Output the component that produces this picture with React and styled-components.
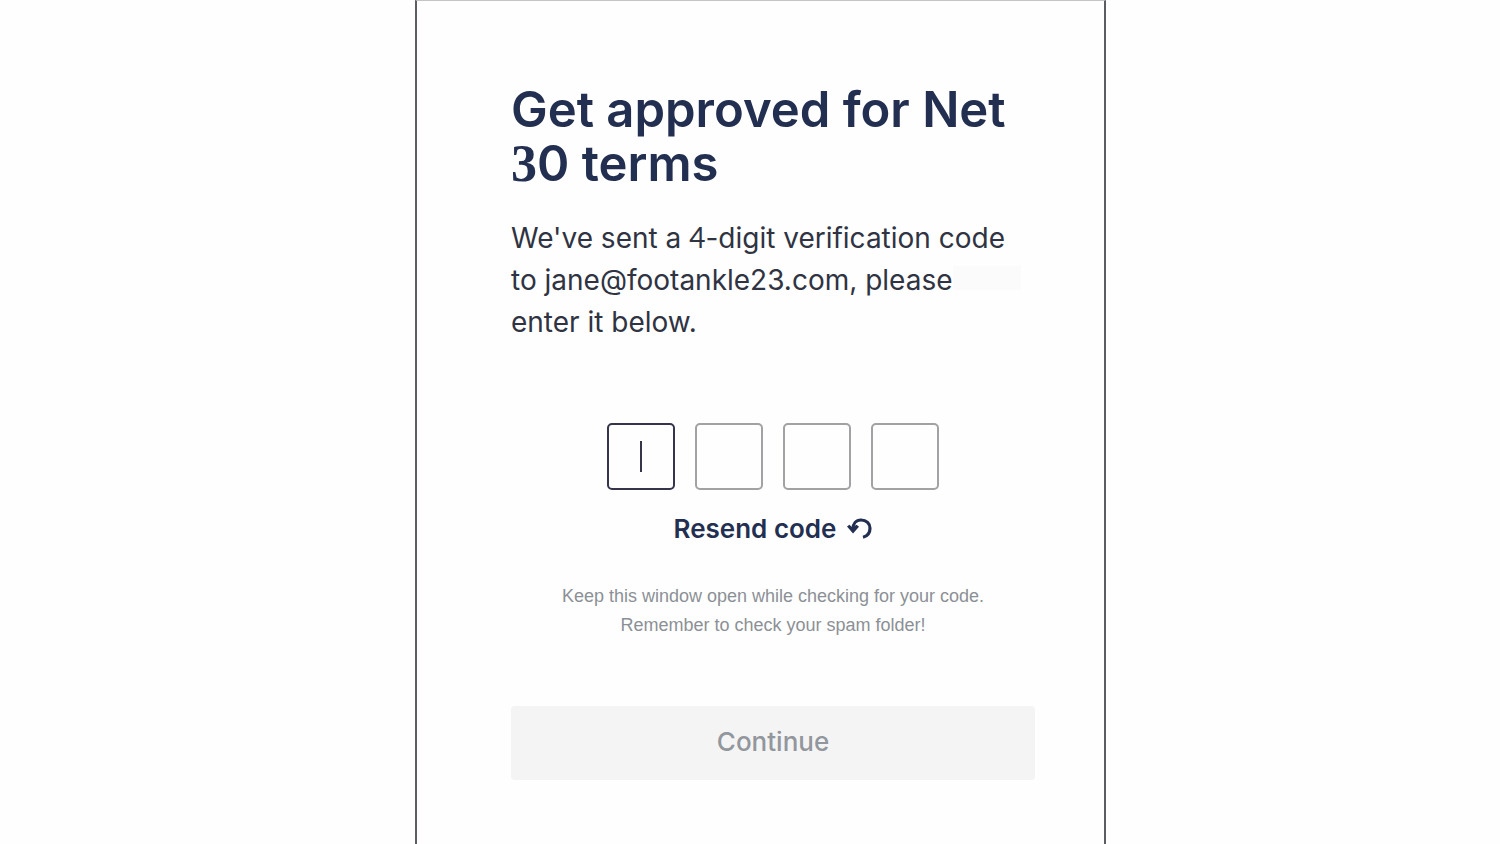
import styled, { createGlobalStyle } from 'styled-components';
import { useRef, useState } from 'react';

const GlobalStyle = createGlobalStyle`
* {
    box-sizing: border-box;
}
body {
    margin: 0;
    background-color: #fefefe;
    font-family: Inter, "Liberation Sans", sans-serif;
}
`;

const Page = styled.div`
    display: flex;
    justify-content: center;
    padding-left: 21px;
    min-height: 100vh;
`;

const Panel = styled.main`
    width: 100%;
    max-width: 691px;
    padding: 82px 69px 64px 94px;
    border: 2px solid #5c5d60;
    border-top: 1px solid #c4c4c6;
    border-bottom: none;
`;

const Form = styled.form`
    display: flex;
    flex-direction: column;
    align-items: center;
`;

const Title = styled.h1`
    margin: 0;
    width: 100%;
    color: #232f50;
    font-size: 49px;
    font-weight: 600;
    line-height: 54px;
`;

const SerifDigit = styled.span`
    font-family: "Liberation Serif", serif;
    font-weight: 700;
    font-size: 52px;
    line-height: 48px;
`;

const Message = styled.p`
    margin: 25px 0 0;
    width: 100%;
    color: #2f3342;
    font-size: 28px;
    line-height: 42px;
`;

const LightDigit = styled.span`
    font-family: Lato, sans-serif;
`;

const Smudge = styled.span`
    display: inline-block;
    width: 68px;
    height: 24px;
    background-color: #fbfbfb;
`;

const CodeRow = styled.div`
    display: flex;
    gap: 20px;
    margin-top: 80px;
`;

const DigitBox = styled.label`
    position: relative;
    display: flex;
`;

const DigitInput = styled.input`
    width: 68px;
    height: 67px;
    padding: 0;
    border: ${(props) => (props.$active ? '2px solid #35344a' : '2px solid #a2a2a5')};
    border-radius: 5px;
    background-color: transparent;
    color: #2f3342;
    caret-color: transparent;
    font-family: inherit;
    font-size: 28px;
    text-align: center;

&:focus {
    outline: none;
}
`;

const Caret = styled.span`
    position: absolute;
    top: 18px;
    left: 33px;
    width: 2px;
    height: 31px;
    background-color: #35344a;
`;

const ResendButton = styled.button`
    display: flex;
    align-items: center;
    gap: 11px;
    margin-top: 23px;
    padding: 0;
    border: none;
    background: none;
    color: #232f50;
    font-family: inherit;
    font-size: 26px;
    font-weight: 600;
    line-height: 32px;
`;

const Hint = styled.p`
    margin: 37px 0 0;
    color: #8c9096;
    font-family: "Liberation Sans", sans-serif;
    font-size: 18px;
    line-height: 29px;
    text-align: center;
`;

const ContinueButton = styled.button`
    width: 100%;
    height: 74px;
    margin-top: 66px;
    padding: 0 0 4px;
    border: none;
    border-radius: 4px;
    background-color: #f4f4f4;
    color: #92969d;
    font-family: inherit;
    font-size: 26px;
    font-weight: 500;
`;

const ResendIcon = () => (
    <svg width="25" height="22" viewBox="0 0 25 22" fill="none" aria-hidden="true">
        <path d="M6 11C6 5.500 9 2 14 2C19.500 2 23 5.600 23 10.200C23 14.500 20.500 18 16 19.200" stroke="currentColor" strokeWidth="3.200" />
        <path d="M0 8.500L2.400 6.800L5.500 9.600L9.500 6.800L12 8.800L6 15.400Z" fill="currentColor" />
    </svg>
);

const App = () => {
    const [digits, setDigits] = useState(['', '', '', '']);
    const [active, setActive] = useState(0);
    const inputs = useRef([]);

    const handleChange = (index, value) => {
        const next = [...digits];
        next[index] = value.replace(/\D/g, '').slice(-1);
        setDigits(next);
        if (next[index] && index < 3) {
            inputs.current[index + 1].focus();
        }
    };

    return (
        <>
            <GlobalStyle />
            <Page>
                <Panel>
                    <Form onSubmit={(e) => e.preventDefault()}>
                        <Title>
                            Get approved for Net <SerifDigit>3</SerifDigit>0 terms
                        </Title>
                        <Message>
                            We've sent a <LightDigit>4</LightDigit>-digit verification code
                            <br />
                            to jane@footankle23.com, please<Smudge />
                            <br />
                            enter it below.
                        </Message>
                        <CodeRow>
                            {digits.map((digit, index) => (
                                <DigitBox key={index}>
                                    <DigitInput
                                        ref={(el) => { inputs.current[index] = el; }}
                                        type="text"
                                        inputMode="numeric"
                                        aria-label={`Digit ${index + 1}`}
                                        value={digit}
                                        $active={active === index}
                                        onFocus={() => setActive(index)}
                                        onChange={(e) => handleChange(index, e.target.value)}
                                    />
                                    {active === index && !digit && <Caret />}
                                </DigitBox>
                            ))}
                        </CodeRow>
                        <ResendButton type="button">
                            Resend code
                            <ResendIcon />
                        </ResendButton>
                        <Hint>
                            Keep this window open while checking for your code.
                            <br />
                            Remember to check your spam folder!
                        </Hint>
                        <ContinueButton type="submit" disabled={digits.includes('')}>
                            Continue
                        </ContinueButton>
                    </Form>
                </Panel>
            </Page>
        </>
    );
};

export default App;
